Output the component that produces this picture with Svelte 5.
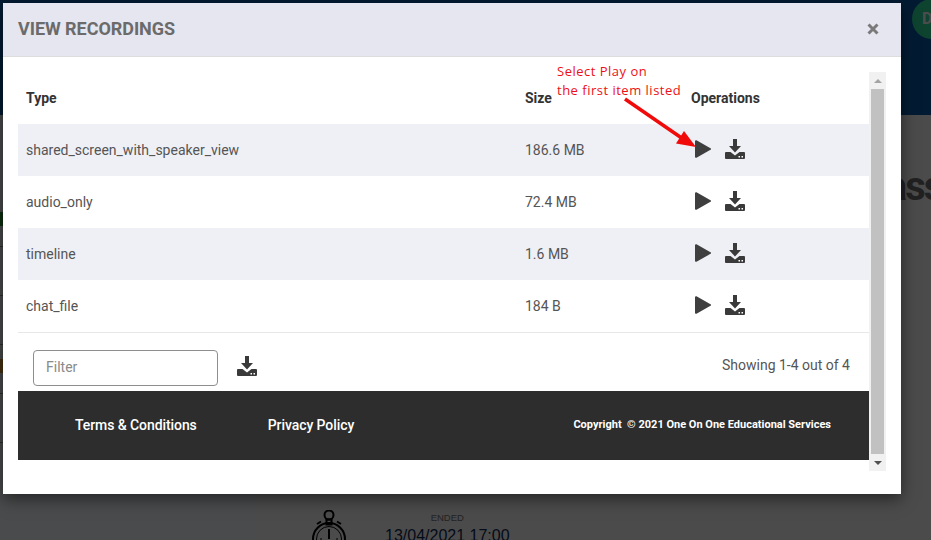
<script>
  const rows = [
    { type: 'shared_screen_with_speaker_view', size: '186.6 MB' },
    { type: 'audio_only', size: '72.4 MB' },
    { type: 'timeline', size: '1.6 MB' },
    { type: 'chat_file', size: '184 B' }
  ];
  const sideRows = ['green', '', '', 'orange', ''];
</script>

<style>
  :global(body) {
    margin: 0;
    font-family: 'Roboto', sans-serif;
  }

  .page {
    position: relative;
    width: 931px;
    height: 540px;
    overflow: hidden;
    background: #fff;
  }

  .topbar {
    height: 115px;
    background: #0a5aa8;
    display: flex;
    justify-content: flex-end;
  }
  .avatar {
    width: 40px;
    height: 40px;
    margin: -1px -21px 0 0;
    border-radius: 50%;
    background: #30e0a0;
    color: #fff;
    font: bold 16px/40px 'Roboto', sans-serif;
    padding-left: 10px;
    box-sizing: border-box;
    flex: none;
  }

  .main {
    height: 425px;
    display: grid;
    grid-template-columns: 255px 1fr;
    grid-template-rows: 425px;
  }
  .side {
    background: #f4fcff;
    padding-top: 83px;
  }
  .side-row {
    height: 49px;
    box-sizing: border-box;
    border-bottom: 1px solid #999;
    padding-top: 14px;
  }
  .tag {
    display: block;
    width: 10px;
    height: 14px;
  }
  .tag.green { background: #2a9d3a; }
  .tag.orange { background: #e8a33a; }

  .content {
    background: #fffafa;
    padding-top: 47px;
    box-sizing: border-box;
    display: flex;
    flex-direction: column;
  }
  .heading {
    margin: 0 0 0 598px;
    font-size: 40px;
    line-height: 50px;
    font-weight: 700;
    letter-spacing: -2px;
    color: #707070;
    white-space: nowrap;
  }
  .ended {
    margin-top: auto;
    margin-left: 56px;
    display: flex;
    gap: 38px;
    height: 30px;
    color: #0a2a55;
  }
  .stopwatch {
    width: 36px;
    height: 44px;
    flex: none;
  }
  .ended-text {
    font-family: 'Liberation Sans', sans-serif;
    text-align: center;
    padding-top: 2px;
  }
  .ended-label {
    font-size: 9.5px;
    color: #777;
    line-height: 12px;
    margin-bottom: 3px;
  }
  .ended-date {
    font-size: 16px;
    line-height: 18px;
    white-space: nowrap;
  }

  .backdrop {
    position: absolute;
    inset: 0;
    background: rgba(0, 0, 0, 0.7);
  }

  .modal {
    position: absolute;
    top: 3px;
    left: 3px;
    width: 898px;
    height: 491px;
    background: #fff;
    box-shadow: 0 5px 15px rgba(0, 0, 0, 0.5);
    display: flex;
    flex-direction: column;
  }

  .modal-header {
    height: 54px;
    box-sizing: border-box;
    background: #e6e6f0;
    border-bottom: 1px solid #ddd;
    display: flex;
    align-items: center;
    justify-content: space-between;
    padding: 0 22px 2px 15px;
    flex: none;
  }
  .modal-title {
    margin: 0;
    font-size: 18px;
    font-weight: 700;
    letter-spacing: -0.05px;
    color: #6b6b6b;
    text-transform: uppercase;
  }
  .close {
    display: block;
    width: 12px;
    height: 12px;
    color: #7a7a7a;
  }

  .modal-body {
    padding: 15px 15px 23px;
    display: flex;
    flex: 1;
    min-height: 0;
  }
  .scroll-content {
    flex: 1;
    min-width: 0;
  }

  table {
    width: 100%;
    border-collapse: collapse;
    font-size: 14px;
    color: #555;
    table-layout: fixed;
  }
  th {
    height: 52px;
    padding: 0 8px;
    text-align: left;
    font-weight: 700;
    color: #333;
    vertical-align: middle;
  }
  td {
    height: 52px;
    padding: 0 8px;
    vertical-align: middle;
  }
  tbody tr:nth-child(odd) {
    background: #eff0f5;
  }
  tbody tr:last-child {
    border-bottom: 1px solid #e8e8e8;
  }
  .col-type { width: 483px; }
  .col-size { width: 150px; }

  .ops {
    display: flex;
    align-items: center;
    gap: 13px;
    padding-left: 4px;
    margin-top: -2px;
  }
  .play {
    width: 17px;
    height: 18px;
    color: #3f3f3f;
    display: block;
  }
  .download {
    width: 20px;
    height: 20px;
    color: #3a3a3a;
    display: block;
  }

  .table-tools {
    height: 58px;
    box-sizing: border-box;
    padding: 17px 19px 0 15px;
    display: flex;
    align-items: flex-start;
    gap: 19px;
  }
  .filter {
    width: 185px;
    height: 36px;
    box-sizing: border-box;
    border: 1px solid #8e8e8e;
    border-radius: 4px;
    padding: 0 12px 2px;
    font: 14px 'Roboto', sans-serif;
    color: #555;
    background: #fff;
    outline: none;
  }
  .filter::placeholder {
    color: #8a8a8a;
    opacity: 1;
  }
  .tools-download {
    margin-top: 6px;
  }
  .showing {
    margin-left: auto;
    font-size: 14px;
    color: #555;
    line-height: 30px;
  }

  .footer {
    height: 69px;
    background: #2d2d2d;
    color: #fff;
    display: flex;
    align-items: center;
    padding: 0 38px 2px 57px;
    box-sizing: border-box;
    margin-bottom: 11px;
  }
  .footer a {
    color: #fff;
    text-decoration: none;
    font-size: 14px;
    font-weight: 500;
    letter-spacing: -0.08px;
    margin-right: 71px;
  }
  .copyright {
    margin-left: auto;
    font-size: 11px;
    font-weight: 700;
    white-space: pre;
  }

  .scrollbar {
    width: 17px;
    flex: none;
    background: #f1f1f1;
    display: flex;
    flex-direction: column;
    align-items: center;
  }
  .arrow {
    height: 17px;
    display: flex;
    align-items: center;
    justify-content: center;
    flex: none;
  }
  .arrow svg {
    width: 8px;
    height: 4px;
    display: block;
  }
  .thumb {
    width: 13px;
    flex: 1;
    background: #c1c1c1;
  }

  .note {
    position: absolute;
    left: 557px;
    top: 62px;
    font: 13px/19px 'Open Sans', sans-serif;
    color: #ee0f16;
    letter-spacing: 0.5px;
    white-space: nowrap;
  }
  .note-arrow {
    position: absolute;
    left: 620px;
    top: 94px;
    width: 80px;
    height: 60px;
    overflow: visible;
  }
</style>

{#snippet downloadIcon(cls)}
  <svg class="download {cls}" viewBox="0 0 20 20" aria-hidden="true">
    <path fill="currentColor" d="M8 0h4v7h4l-6 6.5L4 7h4z" />
    <path fill="currentColor" d="M1 13h4.5l4.5 3.5 4.5-3.5H19q1 0 1 1v5q0 1-1 1H1q-1 0-1-1v-5q0-1 1-1z" />
    <path fill="#fff" d="M13.5 17h1.5v1.5h-1.5zM16.5 17H18v1.5h-1.5z" />
  </svg>
{/snippet}

<div class="page">
  <div class="topbar">
    <div class="avatar">D</div>
  </div>
  <div class="main">
    <div class="side">
      {#each sideRows as r}
        <div class="side-row">
          {#if r}<span class="tag {r}"></span>{/if}
        </div>
      {/each}
    </div>
    <div class="content">
      <h1 class="heading">Class</h1>
      <div class="ended">
        <svg class="stopwatch" viewBox="0 0 36 44" fill="none" stroke="#000" stroke-width="2" aria-hidden="true">
          <circle cx="18" cy="5" r="4.5" />
          <path d="M15.5 9.5h5v5h-5z" />
          <path d="M6 14l4-2.5M30 14l-4-2.5" />
          <circle cx="18" cy="29" r="16" />
          <circle cx="18" cy="29" r="12.5" stroke-width="1" />
          <path d="M18 19v10" />
          <path d="M9 29h2M25 29h2" stroke-width="1" />
        </svg>
        <div class="ended-text">
          <div class="ended-label">ENDED</div>
          <div class="ended-date">13/04/2021 17:00</div>
        </div>
      </div>
    </div>
  </div>

  <div class="backdrop"></div>

  <div class="modal">
    <div class="modal-header">
      <h4 class="modal-title">View Recordings</h4>
      <svg class="close" viewBox="0 0 12 12" aria-hidden="true">
        <path d="M1.5 1.5l9 9M10.5 1.5l-9 9" stroke="currentColor" stroke-width="3" />
      </svg>
    </div>
    <div class="modal-body">
      <div class="scroll-content">
        <table>
          <thead>
            <tr>
              <th class="col-type">Type</th>
              <th class="col-size">Size</th>
              <th>Operations</th>
            </tr>
          </thead>
          <tbody>
            {#each rows as row}
              <tr>
                <td>{row.type}</td>
                <td>{row.size}</td>
                <td>
                  <div class="ops">
                    <svg class="play" viewBox="0 0 17 18" aria-hidden="true">
                      <path fill="currentColor" stroke="currentColor" stroke-width="2" stroke-linejoin="round" d="M1 1.2L15 9 1 16.8z" />
                    </svg>
                    {@render downloadIcon('')}
                  </div>
                </td>
              </tr>
            {/each}
          </tbody>
        </table>
        <div class="table-tools">
          <input class="filter" placeholder="Filter" />
          {@render downloadIcon('tools-download')}
          <div class="showing">Showing 1-4 out of 4</div>
        </div>
        <div class="footer">
          <a href="#terms">Terms &amp; Conditions</a>
          <a href="#privacy">Privacy Policy</a>
          <div class="copyright">Copyright  © 2021 One On One Educational Services</div>
        </div>
      </div>
      <div class="scrollbar">
        <div class="arrow">
          <svg viewBox="0 0 8 4" aria-hidden="true"><path d="M4 0l4 4H0z" fill="#a3a3a3" /></svg>
        </div>
        <div class="thumb"></div>
        <div class="arrow">
          <svg viewBox="0 0 8 4" aria-hidden="true"><path d="M0 0h8L4 4z" fill="#505050" /></svg>
        </div>
      </div>
    </div>
  </div>

  <div class="note">Select Play on<br />the first item listed</div>
  <svg class="note-arrow" viewBox="0 0 80 60" aria-hidden="true">
    <path d="M5 5L66 47" stroke="#f00a0a" stroke-width="3.5" fill="none" />
    <path d="M76 53L56 49.5 64 37z" fill="#f00a0a" />
  </svg>
</div>
